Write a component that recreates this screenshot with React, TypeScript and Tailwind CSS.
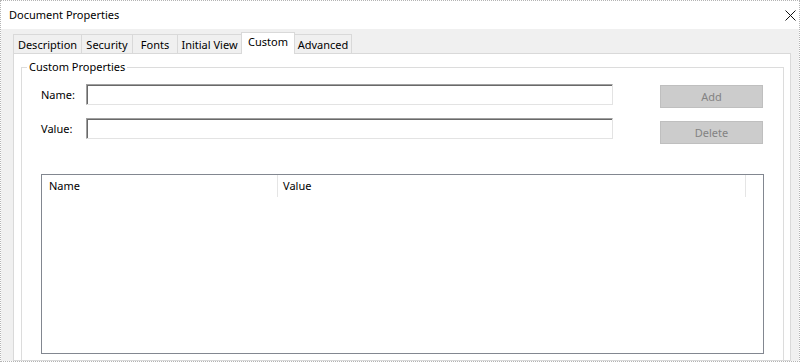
import React from "react";

const tabs = [
  { label: "Description", w: 69 },
  { label: "Security", w: 52 },
  { label: "Fonts", w: 46 },
  { label: "Initial View", w: 65 },
  { label: "Custom", w: 54, active: true },
  { label: "Advanced", w: 58 },
];

function Input() {
  return (
    <div className="h-[21px] w-[527px] bg-white border border-t-[#a0a0a0] border-l-[#a0a0a0] border-r-[#e3e3e3] border-b-[#e3e3e3] shadow-[inset_1px_1px_0_#696969]" />
  );
}

export default function App() {
  return (
    <div className="w-[800px] h-[362px] border border-dotted border-[#b4b4b4] flex flex-col overflow-hidden bg-white font-['Noto_Sans',sans-serif] text-[11px] leading-[16px] text-black">
      <div className="h-[28px] shrink-0 flex items-center justify-between pl-[8px] pr-[3px]">
        <span className="text-[11px]">Document Properties</span>
        <svg width="11" height="11" viewBox="0 0 11 11" className="mt-[1px]">
          <path d="M0.5 0.5 L10.5 10.5 M10.5 0.5 L0.5 10.5" stroke="#111" strokeWidth="1" />
        </svg>
      </div>
      <div className="flex-1 flex flex-col bg-[#f0f0f0] pl-[12px] pr-[8px] pt-[4px] min-h-0">
        <div className="flex items-end h-[20px] shrink-0">
          {tabs.map((t, i) =>
            t.active ? (
              <div
                key={t.label}
                style={{ width: t.w }}
                className={`relative z-10 h-[22px] -mb-[1px] bg-white border-x border-t border-[#d9d9d9] flex items-start justify-center pt-[1px] ${i > 0 ? "-ml-px" : ""}`}
              >
                {t.label}
              </div>
            ) : (
              <div
                key={t.label}
                style={{ width: t.w }}
                className={`h-[19px] bg-[#f0f0f0] border-x border-t border-[#d9d9d9] flex items-center justify-center pt-[1px] ${i > 0 ? "-ml-px" : ""}`}
              >
                {t.label}
              </div>
            )
          )}
        </div>
        <div className="flex-1 bg-white border border-[#d9d9d9] pl-[7px] pr-[6px] pt-[5px] min-h-0">
          <fieldset className="h-[320px] border border-[#dcdcdc]">
            <legend className="ml-[5px] px-[2px] leading-[16px]">Custom Properties</legend>
            <div className="pl-[19px] pt-[9px]">
              <div className="flex">
                <div className="flex flex-col gap-[13px]">
                  <div className="flex items-center">
                    <span className="w-[45px]">Name:</span>
                    <Input />
                  </div>
                  <div className="flex items-center">
                    <span className="w-[45px]">Value:</span>
                    <Input />
                  </div>
                </div>
                <div className="ml-[47px] mt-[1px] flex flex-col gap-[13px]">
                  <div className="h-[23px] w-[103px] bg-[#cccccc] border border-[#bfbfbf] text-[#838383] flex items-center justify-center">
                    Add
                  </div>
                  <div className="h-[23px] w-[103px] bg-[#cccccc] border border-[#bfbfbf] text-[#838383] flex items-center justify-center">
                    Delete
                  </div>
                </div>
              </div>
              <div className="mt-[30px] w-[723px] h-[180px] border border-[#828790] bg-white">
                <div className="flex h-[22px]">
                  <div className="w-[236px] pl-[7px] flex items-center border-r border-[#e5e5e5]">Name</div>
                  <div className="w-[468px] pl-[5px] flex items-center border-r border-[#e5e5e5]">Value</div>
                </div>
              </div>
            </div>
          </fieldset>
        </div>
      </div>
    </div>
  );
}
